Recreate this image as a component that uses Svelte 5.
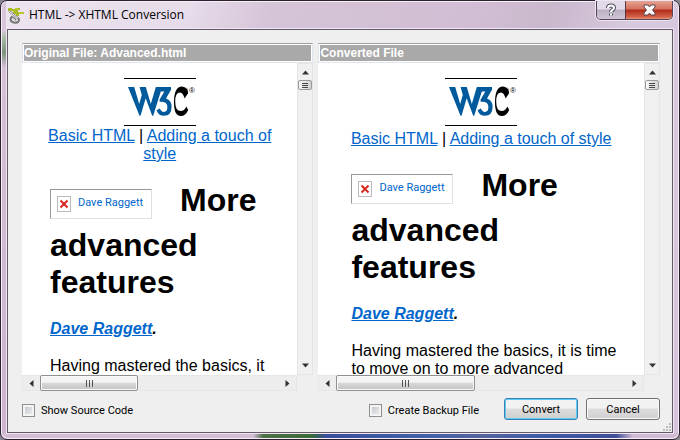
<script>
  const panes = [
    {
      title: 'Original File: Advanced.html',
      kind: 'original',
      copy: 'Having mastered the basics, it'
    },
    {
      title: 'Converted File',
      kind: 'converted',
      copy: 'Having mastered the basics, it is time to move on to more advanced'
    }
  ];
  let showSource = $state(false);
  let backup = $state(false);
</script>

{#snippet arrow(dir)}
  <svg class="arrow {dir}" width="7" height="7" viewBox="0 0 7 7" aria-hidden="true">
    <path d="M0 5.5 L3.5 1.5 L7 5.5Z" fill="#333" />
  </svg>
{/snippet}

<div class="window">
  <header class="titlebar">
    <svg class="app-icon" width="17" height="17" viewBox="0 0 17 17" aria-hidden="true">
      <path d="M0 1h4v1h3V1h5v2h-2v2h6v2h-5v2H8V7H5V4H0z" fill="#a9bb22" />
      <path d="M7 2h3M11 6h5" stroke="#c9d640" stroke-width="1" />
      <path d="M1 4l9 7q2 2 0 4q-4 2-7-1q-1-3 1-4l4 3" fill="none" stroke="#777" stroke-width="2" />
      <path d="M1 4l9 7M4 11l3 2" stroke="#f2f2f2" stroke-width="1" />
    </svg>
    <h1>HTML -&gt; XHTML Conversion</h1>
    <div class="caption">
      <button class="help" aria-label="Help">
        <svg width="12" height="14" viewBox="0 0 12 14" aria-hidden="true">
          <g fill="none" stroke-linejoin="round">
            <path d="M3 5Q3 2.500 6 2.500T9 5Q9 6 7.500 7Q6 7.700 6 9M6 10.500v2" stroke="#4c4c60" stroke-width="4" />
            <path d="M3 5Q3 2.500 6 2.500T9 5Q9 6 7.500 7Q6 7.700 6 9M6 10.500v2" stroke="#fff" stroke-width="2" />
          </g>
        </svg>
      </button>
      <button class="close" aria-label="Close">
        <svg width="13" height="12" viewBox="0 0 13 12" aria-hidden="true">
          <path d="M1 1h4l1.500 2L8 1h4v2L9.500 6L12 9v2H8L6.500 9L5 11H1V9L3.500 6L1 3z" fill="#fff" stroke="#5a4655" stroke-width="1" />
        </svg>
      </button>
    </div>
  </header>

  <main class="client">
    <div class="panes">
      {#each panes as pane}
        <section class="pane {pane.kind}">
          <h2>{pane.title}</h2>
          <div class="viewer">
            <article class="page">
              <div class="center">
                <svg class="logo" width="72" height="48" viewBox="0 0 72 48" role="img" aria-label="W3C">
                  <path d="M0 .5h72M0 47.500h72" stroke="#000" />
                  <path d="M4 9h6.200l5 17l2.600-9L15.600 9h6.200l5 17L31.800 9H47v2.800l-5 8.700q5.600 1.900 5.600 8.200q0 9-7.800 9q-5.200 0-7.300-5.500l3.400-1.600q1.400 3.400 3.900 3.400q3.600 0 3.600-4.900q0-5.300-6.400-5.300h-1.400v-2.200L40.400 13.400H36.800l-7.600 24.300h-1l-6.500-17.500l-5.200 17.500h-1z" fill="#005a9c" />
                  <path d="M62.800 8.800l1.400 6.200l-3.600 5.400q-1.600-6-4.600-6q-4.800 0-4.800 9q0 9.600 5.600 9.600q3.400 0 5.600-4.500l1.800 3.500q-2.600 6-7.400 6q-6.800 0-6.800-13.500q0-16 8-16q3 0 4.800 2.600z" fill="#000" />
                  <text x="65" y="15" class="reg">®</text>
                </svg>
                <p class="links">
                  <a href="#basic">Basic HTML</a> | <a href="#style">Adding a touch of style</a>
                </p>
              </div>
              <h3>
                <a class="missing" href="#raggett">
                  <svg width="14" height="16" viewBox="0 0 14 16" aria-hidden="true">
                    <rect x=".5" y=".5" width="13" height="15" fill="#fff" stroke="#bbb" />
                    <path d="M3.500 4.500l7 7M10.500 4.500l-7 7" stroke="#d9291c" stroke-width="2" />
                  </svg>
                  <span>Dave Raggett</span>
                </a>More advanced features
              </h3>
              <p class="author"><a href="#author">Dave Raggett</a>.</p>
              <p class="copy">{pane.copy}</p>
            </article>
            <div class="vbar">
              {@render arrow('up')}
              <div class="vthumb"><i></i><i></i><i></i></div>
              <div class="spacer"></div>
              {@render arrow('down')}
            </div>
          </div>
          <div class="hbar">
            {@render arrow('left')}
            <div class="track"><div class="hthumb"><i></i><i></i><i></i></div></div>
            {@render arrow('right')}
          </div>
        </section>
      {/each}
    </div>

    <footer>
      <label><input type="checkbox" bind:checked={showSource} />Show Source Code</label>
      <label class="backup"><input type="checkbox" bind:checked={backup} />Create Backup File</label>
      <div class="actions">
        <button class="btn primary">Convert</button>
        <button class="btn">Cancel</button>
      </div>
    </footer>
    <svg class="grip" width="9" height="9" viewBox="0 0 9 9" aria-hidden="true">
      <path d="M7 0h2v2H7zM7 3h2v2H7zM7 6h2v2H7zM4 3h2v2H4zM4 6h2v2H4zM1 6h2v2H1z" fill="#bbb" />
    </svg>
  </main>
</div>

<style>
  :global(body) { margin: 0; background: #8b8790; }
  * { box-sizing: border-box; }
  h1, h2, h3, p { margin: 0; }
  button { font: inherit; color: inherit; }

  .window {
    display: flex;
    flex-direction: column;
    height: 100vh;
    min-height: 300px;
    padding: 0 5px 6px;
    border: 1px solid #2a222c;
    border-radius: 7px;
    box-shadow: inset 0 0 0 1px #f7eef8;
    background:
      linear-gradient(90deg, #d4bfd5 252px, #4d7048 262px, #3c6b38 310px, #38509a 325px, #4461a8 430px, #55659c 480px, #3f5ba8 540px, #3f4f98 615px, #d0bcd2 632px) 0 100% / 100% 6px no-repeat,
      linear-gradient(180deg, #d8c5da 30px, #a9bda9 36px, #7d927d 52px, #d5c0d6 66px, #cbb4cc) 0 0 / 5px 100% no-repeat,
      linear-gradient(110deg, #ece4ef, #e6dcea 180px, #d5c3d7 260px, #d1bed4 450px, #cab8cd 520px, #d8cade 600px, #d5c4d9);
    font-family: Roboto, "Liberation Sans", sans-serif;
  }
  .titlebar { display: flex; align-items: center; height: 28px; flex: none; }
  .app-icon { margin-left: 2px; }
  h1 {
    flex: 1;
    margin-left: 4px;
    font: 400 12px/16px "Open Sans", "Noto Sans", sans-serif;
    color: #000;
  }
  .caption {
    display: flex;
    align-self: flex-start;
    height: 19px;
    border: 1px solid #54465a;
    border-top: 0;
    border-radius: 0 0 5px 5px;
    overflow: hidden;
    box-shadow: 0 0 0 1px #eee3f0;
    margin-right: 1px;
  }
  .caption button { display: flex; align-items: center; justify-content: center; padding: 0; border: 0; }
  .help { width: 28px; background: linear-gradient(#e2dae6 45%, #bbb0c3 50%, #d0c6d8); }
  .caption .close { width: 47px; border-left: 1px solid #5a3440; background: linear-gradient(#e5a394, #d2705c 45%, #b02b18 50%, #d4654c 90%, #e89a80); }

  .client {
    position: relative;
    display: flex;
    flex-direction: column;
    flex: 1;
    min-height: 0;
    margin: 0 1px;
    padding: 13px 12px 12px 14px;
    border: 1px solid #64596a;
    background: #efefef;
    box-shadow: 0 0 0 1px #f0e6f2;
  }
  .panes { display: grid; grid-template-columns: 291fr 341fr; gap: 5px; flex: 1; min-height: 0; }
  .pane { display: flex; flex-direction: column; min-width: 0; min-height: 0; }
  h2 {
    flex: none;
    height: 20px;
    padding-left: 1px;
    border: 1px solid #dfe5ec;
    border-top-color: #a0a0a0;
    box-shadow: inset 0 0 0 1px #fff;
    background: #a9a9a9;
    color: #fff;
    font: 700 12px/18px "Liberation Sans", Arial, sans-serif;
    white-space: nowrap;
    overflow: hidden;
  }
  .viewer { display: flex; flex: 1; min-height: 0; }
  .page {
    flex: 1;
    min-width: 0;
    overflow: hidden;
    padding: 15px 28px 0;
    background: #fff;
    color: #000;
    font-family: "Liberation Sans", Arial, sans-serif;
    font-size: 16px;
    line-height: 18px;
  }
  .converted .page { padding: 15px 33px 0; }
  a { color: #0066cc; }
  .center { text-align: center; }
  .logo { display: block; margin: 0 auto; }
  .reg { font: 8px "Liberation Sans", Arial, sans-serif; }
  .links { margin: 0 -6px; padding-top: 1px; }
  .converted .links { padding-top: 4px; }
  h3 { margin-top: 19px; font-size: 32px; line-height: 37px; }
  .missing {
    display: inline-flex;
    gap: 7px;
    width: 102px;
    height: 30px;
    margin: 0 28px 8px 0;
    padding: 6px 0 0 6px;
    border: 1px solid #e0e0e0;
    border-top-color: #999;
    border-left-color: #999;
    vertical-align: -1px;
    font: 400 11px/14px Roboto, "Liberation Sans", sans-serif;
    text-decoration: none;
    white-space: nowrap;
  }
  .author { margin-top: 19px; font-weight: 700; font-style: italic; }
  .copy { margin: 19px -6px 0 0; }

  .vbar {
    display: flex;
    flex-direction: column;
    align-items: center;
    width: 16px;
    flex: none;
    padding: 5px 0;
    border: 1px solid #e6e6e6;
    background: #f0f0f0;
  }
  .spacer { flex: 1; }
  .vthumb {
    display: flex;
    flex-direction: column;
    justify-content: center;
    gap: 1px;
    width: 14px;
    height: 10px;
    margin-top: 4px;
    padding: 0 3px;
    border: 1px solid #999;
    border-radius: 2px;
    background: linear-gradient(90deg, #f8f8f8, #d2d2d2);
  }
  .vthumb i { height: 1px; background: #444; }
  .hbar {
    display: flex;
    align-items: center;
    flex: none;
    height: 16px;
    margin-right: 16px;
    padding: 0 5px;
    border: 1px solid #e6e6e6;
    background: #ededed;
  }
  .track { flex: 1; align-self: stretch; margin: -1px 5px; }
  .hthumb {
    display: flex;
    justify-content: center;
    align-items: center;
    gap: 2px;
    width: 41%;
    height: 16px;
    border: 1px solid #8f8f8f;
    border-radius: 2px;
    box-shadow: inset 0 0 0 1px #fafafa;
    background: linear-gradient(#f4f4f4 45%, #d8d8d8 50%, #c4c4c4);
  }
  .converted .hthumb { width: 48%; }
  .hthumb i { width: 1px; height: 7px; background: #555; }
  .arrow { flex: none; }
  .down { transform: rotate(180deg); }
  .left { transform: rotate(-90deg); }
  .right { transform: rotate(90deg); }

  footer { display: flex; align-items: center; flex: none; height: 22px; margin-top: 7px; font-size: 11px; color: #000; }
  label { display: flex; align-items: center; gap: 6px; padding-top: 3px; white-space: nowrap; }
  .backup { margin-left: auto; }
  .actions { display: flex; gap: 8px; margin-left: 25px; }
  input {
    appearance: none;
    width: 13px;
    height: 13px;
    margin: 0;
    border: 1px solid #8e8f8f;
    box-shadow: inset 0 0 0 2px #f4f4f4;
    background: linear-gradient(135deg, #bcc1c8, #f3f3f3);
  }
  input:checked { background: #2b5a9b; }
  .btn {
    width: 74px;
    height: 22px;
    padding: 0;
    border: 1px solid #707070;
    border-radius: 3px;
    box-shadow: inset 0 0 0 1px #fbfbfb;
    background: linear-gradient(#f2f2f2 45%, #dddddd 50%, #cfcfcf);
  }
  .btn.primary { border-color: #3c7fb1; box-shadow: inset 0 0 0 1px #5ccdf2; }
  .grip { position: absolute; right: 1px; bottom: 0; }
</style>
